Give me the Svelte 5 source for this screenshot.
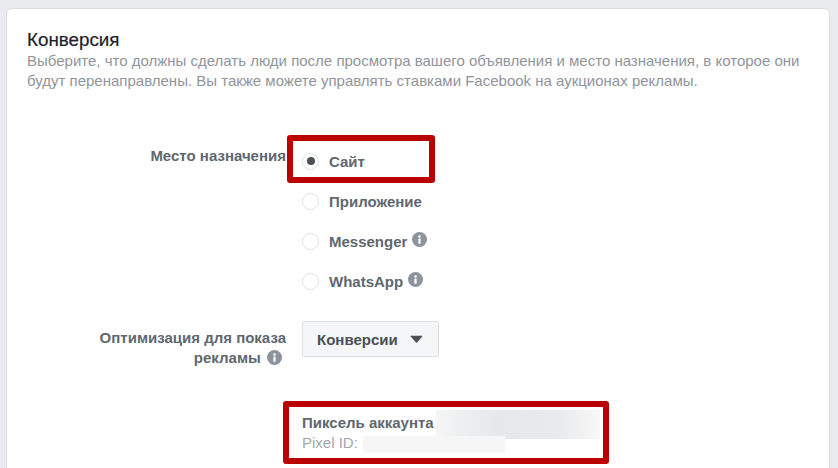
<script lang="ts">
  const options = [
    { label: 'Сайт', checked: true, info: false },
    { label: 'Приложение', checked: false, info: false },
    { label: 'Messenger', checked: false, info: true },
    { label: 'WhatsApp', checked: false, info: true }
  ]
</script>

{#snippet infoIcon()}
  <svg class="info" viewBox="0 0 16 16" width="15" height="15" aria-hidden="true">
    <circle cx="8" cy="8" r="8" fill="#8d949e" />
    <rect x="6.8" y="7" width="2.4" height="5.6" rx="0.4" fill="#fff" />
    <circle cx="8" cy="4.7" r="1.35" fill="#fff" />
  </svg>
{/snippet}

<div class="page">
  <section class="card">
    <h2>Конверсия</h2>
    <p class="desc">
      Выберите, что должны сделать люди после просмотра вашего объявления и место назначения, в которое они
      будут перенаправлены. Вы также можете управлять ставками Facebook на аукционах рекламы.
    </p>

    <div class="row row-dest">
      <div class="label label-dest">Место назначения</div>
      <div class="radios">
        {#each options as opt}
          <div class="radio-row">
            <span class="radio">
              {#if opt.checked}<span class="dot"></span>{/if}
            </span>
            <span class="radio-label">{opt.label}</span>
            {#if opt.info}{@render infoIcon()}{/if}
          </div>
        {/each}
      </div>
    </div>

    <div class="row row-opt">
      <div class="label label-opt">Оптимизация для показа рекламы {@render infoIcon()}</div>
      <button class="select" type="button">
        Конверсии
        <svg viewBox="0 0 12 8" width="13" height="8" aria-hidden="true">
          <path d="M0.6 0.8h10.8a.5.5 0 0 1 .4.8L6.5 7.4a.7.7 0 0 1-1 0L.2 1.6a.5.5 0 0 1 .4-.8z" fill="#4b4f56" />
        </svg>
      </button>
    </div>

    <div class="row row-pixel">
      <div class="label"></div>
      <div class="pixel">
        <div class="pixel-name">
          Пиксель аккаунта
          <span class="blur blur-name"></span>
        </div>
        <div class="pixel-id">
          Pixel ID:
          <span class="id-cut">:</span>
          <span class="blur blur-id"></span>
        </div>
      </div>
    </div>
  </section>

  <div class="mark mark-site"></div>
  <div class="mark mark-pixel"></div>
</div>

<style>
  :global(body) {
    margin: 0;
    background: #e9ebee;
  }
  .page {
    position: relative;
    width: 838px;
    height: 468px;
    overflow: hidden;
    padding: 8px 8px 0 6px;
    box-sizing: border-box;
    font-family: "Liberation Sans", Arial, sans-serif;
  }
  .card {
    height: 480px;
    box-sizing: border-box;
    background: #fff;
    border: 1px solid #dddfe2;
    border-radius: 6px;
    padding: 20px 10px 0 20px;
  }
  h2 {
    margin: 0;
    font-size: 18.8px;
    line-height: 22px;
    font-weight: 400;
    color: #1d2129;
    -webkit-text-stroke: 0.2px #1d2129;
  }
  .desc {
    margin: 0;
    font-size: 15px;
    line-height: 20px;
    color: #90949c;
    width: 790px;
  }
  .row {
    display: grid;
    grid-template-columns: 259px 1fr;
    column-gap: 16px;
  }
  .row-dest {
    margin-top: 60px;
  }
  .row-opt {
    margin-top: 30px;
  }
  .row-pixel {
    margin-top: 45px;
  }
  .label {
    text-align: right;
    font-size: 15px;
    line-height: 20px;
    font-weight: 700;
    color: #606770;
    padding-left: 60px;
  }
  .label .info {
    vertical-align: -2px;
    margin-left: 2px;
    margin-right: 4px;
  }
  .label-dest {
    margin-top: -5px;
  }
  .label-opt {
    padding-top: 7px;
  }
  .radios {
    display: flex;
    flex-direction: column;
    gap: 20px;
  }
  .radio-row {
    display: flex;
    align-items: center;
    height: 20px;
    font-size: 15px;
    font-weight: 700;
    color: #606770;
  }
  .radio {
    width: 17px;
    height: 17px;
    box-sizing: border-box;
    border: 1px solid #dddfe2;
    border-radius: 50%;
    background: #fff;
    display: flex;
    align-items: center;
    justify-content: center;
    margin-right: 10px;
  }
  .dot {
    width: 8px;
    height: 8px;
    border-radius: 50%;
    background: #4b4f56;
  }
  .radio-row .info {
    margin-left: 5px;
    margin-top: -4px;
  }
  .select {
    justify-self: start;
    height: 36px;
    box-sizing: border-box;
    display: flex;
    align-items: center;
    gap: 12px;
    padding: 0 15px 0 14px;
    background: #f5f6f7;
    border: 1px solid #dddfe2;
    border-radius: 2px;
    font-family: inherit;
    font-size: 15px;
    font-weight: 700;
    color: #4b4f56;
  }
  .pixel {
    font-size: 15px;
    line-height: 20px;
  }
  .pixel-name {
    display: flex;
    font-weight: 700;
    color: #606770;
    gap: 2px;
  }
  .pixel-id {
    display: flex;
    color: #a2a6ad;
  }
  .id-cut {
    margin-left: 4px;
  }
  .blur {
    display: block;
    background: #f1f2f3;
  }
  .blur-name {
    width: 164px;
    height: 29px;
    margin-top: -3px;
    margin-bottom: -6px;
    background: linear-gradient(90deg, #f4f5f5, #e6e7e9 40%, #e9eaeb 75%, #f8f8f9);
  }
  .blur-id {
    width: 142px;
    height: 17px;
    margin-left: -3px;
    margin-top: 3px;
    background: #f6f6f7;
  }
  .mark {
    position: absolute;
    box-sizing: border-box;
    border: 6px solid #bb0000;
    border-radius: 3px;
    pointer-events: none;
  }
  .mark-site {
    left: 287px;
    top: 135px;
    width: 148px;
    height: 48px;
  }
  .mark-pixel {
    left: 283px;
    top: 401px;
    width: 326px;
    height: 63px;
  }
</style>
